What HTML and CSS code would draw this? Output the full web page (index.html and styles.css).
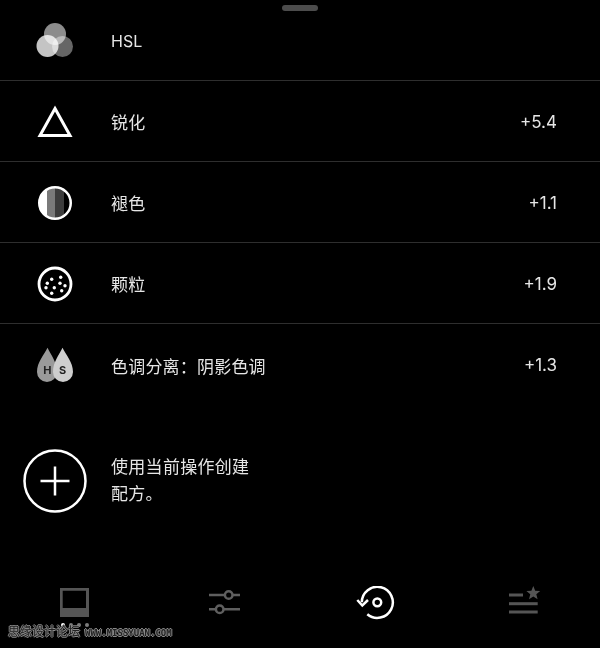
FILE: index.html
```html
<!DOCTYPE html>
<html lang="zh-CN">

<head>
    <meta charset="UTF-8">
    <meta name="viewport" content="width=device-width, initial-scale=1.0">
    <title>配方</title>
    <link rel="stylesheet" href="styles.css">
</head>

<body>
    <div class="handle"></div>

    <div class="list">
        <div class="row">
            <svg class="row-icon" width="40" height="40" viewBox="0 0 40 40">
                <circle class="mix" cx="20" cy="13" r="11" fill="#8c8c8c" />
                <circle class="mix" cx="27.500" cy="25.500" r="10.500" fill="#666" />
                <circle class="mix" cx="12.500" cy="25" r="11" fill="#c4c4c4" />
            </svg>
            <span class="label label-latin">HSL</span>
        </div>
        <div class="row">
            <svg class="row-icon" width="40" height="40" viewBox="0 0 40 40">
                <path d="M20 6.500L35 33.500H5z" fill="none" stroke="#fff" stroke-width="3" />
            </svg>
            <span class="label">锐化</span>
            <span class="value">+5.4</span>
        </div>
        <div class="row">
            <svg class="row-icon" width="40" height="40" viewBox="0 0 40 40">
                <circle cx="20" cy="20" r="16" fill="#fff" />
                <path d="M29 7.500A15 15 0 0 1 29 32.500z" fill="#000" />
                <rect x="12" y="5" width="8" height="30" fill="#7a7a7a" />
                <rect x="20" y="5" width="9" height="30" fill="#3c3c3c" />
                <circle cx="20" cy="20" r="15.750" fill="none" stroke="#fff" stroke-width="2.500" />
            </svg>
            <span class="label">褪色</span>
            <span class="value">+1.1</span>
        </div>
        <div class="row">
            <svg class="row-icon" width="40" height="40" viewBox="0 0 40 40">
                <circle cx="20" cy="20" r="16" fill="none" stroke="#fff" stroke-width="2.800" />
                <g fill="#fff">
                    <circle cx="16.700" cy="15.300" r="1.700" />
                    <circle cx="25.700" cy="13.300" r="1.700" />
                    <circle cx="12.300" cy="19.300" r="1.700" />
                    <circle cx="25" cy="19.300" r="1.700" />
                    <circle cx="30" cy="21.700" r="1.700" />
                    <circle cx="11" cy="23.700" r="1.700" />
                    <circle cx="19.300" cy="23.700" r="1.700" />
                    <circle cx="26.700" cy="26.700" r="1.700" />
                    <circle cx="16.700" cy="29.300" r="1.700" />
                </g>
            </svg>
            <span class="label">颗粒</span>
            <span class="value">+1.9</span>
        </div>
        <div class="row">
            <svg class="row-icon" width="40" height="40" viewBox="0 0 40 40">
                <path d="M12.500 2.700C16 10 22 17 22 27a10 10 0 0 1 -20 0C2 17 9 10 12.500 2.700z" fill="#9a9a9a" />
                <path d="M27.500 2.700C31 10 38 17 38 27a10 10 0 0 1 -20 0C18 17 24 10 27.500 2.700z" fill="#cecece" />
                <text x="12.300" y="28.500" class="drop-letter">H</text>
                <text x="27.500" y="28.500" class="drop-letter">S</text>
            </svg>
            <span class="label">色调分离：阴影色调</span>
            <span class="value">+1.3</span>
        </div>
    </div>

    <div class="create">
        <svg class="create-icon" width="64" height="64" viewBox="0 0 64 64">
            <circle cx="32" cy="32" r="30.500" fill="none" stroke="#fff" stroke-width="2.500" />
            <path d="M17.500 32H46.500M32 17.500V46.500" stroke="#fff" stroke-width="2.500" />
        </svg>
        <p class="create-text">使用当前操作创建<br>配方。</p>
    </div>

    <div class="tabs">
        <div class="tab">
            <svg width="40" height="34" viewBox="0 0 40 34">
                <path fill-rule="evenodd" d="M5 2H34V31H5zM7.700 4.700V22H31V4.700z" fill="#555" />
            </svg>
            <div class="dots">
                <span class="dot dot-on"></span>
                <span class="dot"></span>
                <span class="dot"></span>
                <span class="dot"></span>
            </div>
        </div>
        <div class="tab">
            <svg width="40" height="34" viewBox="0 0 40 34">
                <g fill="none" stroke="#5f5f5f" stroke-width="2.500">
                    <path d="M4 9H19.900M27.500 9H35" />
                    <circle cx="23.700" cy="9" r="3.800" />
                    <path d="M4 23.300H10.900M18.500 23.300H35" />
                    <circle cx="14.700" cy="23.300" r="3.800" />
                </g>
            </svg>
        </div>
        <div class="tab">
            <svg width="40" height="34" viewBox="0 0 40 34">
                <g fill="none" stroke="#fff" stroke-width="2.500">
                    <path d="M6.800 16.300A15.500 15.500 0 1 1 12.300 28.200" />
                    <path d="M2.300 14L7.300 19.500L13 14" />
                    <circle cx="22.300" cy="16.300" r="3.900" />
                </g>
            </svg>
        </div>
        <div class="tab">
            <svg width="40" height="34" viewBox="0 0 40 34">
                <g fill="#555">
                    <rect x="4" y="7.500" width="14" height="3" />
                    <rect x="4" y="16.200" width="28.700" height="3" />
                    <rect x="4" y="24.500" width="28.700" height="3" />
                    <path d="M28.300 0L30.200 4.700L35.200 5L31.300 8.300L32.600 13.200L28.300 10.500L24 13.200L25.300 8.300L21.400 5L26.400 4.700z" />
                </g>
            </svg>
        </div>
    </div>

    <div class="watermark"><span>思缘设计论坛</span><span class="watermark-url">WWW.MISSYUAN.COM</span></div>
</body>

</html>
```

FILE: styles.css
```css
* {
    margin: 0;
    padding: 0;
    box-sizing: border-box;
}

html,
body {
    height: 100%;
}

body {
    position: relative;
    background: #000;
    color: #e6e6e6;
    font-family: Inter, "Noto Sans CJK SC", sans-serif;
    overflow: hidden;
    display: flex;
    flex-direction: column;
}

.handle {
    position: absolute;
    top: 5px;
    left: 282px;
    width: 36px;
    height: 6px;
    border-radius: 3px;
    background: #4c4c4c;
}

.row {
    height: 81px;
    display: flex;
    align-items: center;
    padding: 1px 43px 0 35px;
    border-bottom: 1px solid #2e2e2e;
}

.row:last-child {
    border-bottom: none;
}

.row-icon {
    flex: none;
    margin-right: 36px;
}

.mix {
    mix-blend-mode: screen;
}

.label {
    font-size: 17px;
    letter-spacing: 0.200px;
}

.label-latin {
    font-size: 16px;
    letter-spacing: 0;
}

.value {
    margin-left: auto;
    font-size: 17px;
}

.drop-letter {
    font-size: 11px;
    font-weight: bold;
    fill: #222;
    text-anchor: middle;
}

.create {
    display: flex;
    align-items: center;
    gap: 24px;
    margin-top: 44px;
    padding-left: 23px;
}

.create-icon {
    flex: none;
}

.create-text {
    font-size: 17px;
    line-height: 27px;
    letter-spacing: 0.300px;
}

.tabs {
    display: grid;
    grid-template-columns: repeat(4, 1fr);
    margin-top: 73px;
}

.tab {
    display: flex;
    flex-direction: column;
    align-items: center;
}

.dots {
    display: flex;
    gap: 4.300px;
    margin-top: 3px;
}

.dot {
    width: 4px;
    height: 4px;
    border-radius: 50%;
    background: #7c7c7c;
}

.dot-on {
    background: #fff;
}

.watermark {
    position: absolute;
    left: 8px;
    top: 623px;
    display: flex;
    align-items: baseline;
    gap: 5px;
    font-family: "Noto Sans CJK SC", sans-serif;
    font-size: 12px;
    line-height: 16px;
    color: #222;
    text-shadow: 1px 0 0 #8a8a8a, -1px 0 0 #8a8a8a, 0 1px 0 #8a8a8a, 0 -1px 0 #8a8a8a;
    white-space: nowrap;
}

.watermark-url {
    font-family: "DejaVu Sans Mono", monospace;
    font-size: 9px;
    font-weight: bold;
}
```
